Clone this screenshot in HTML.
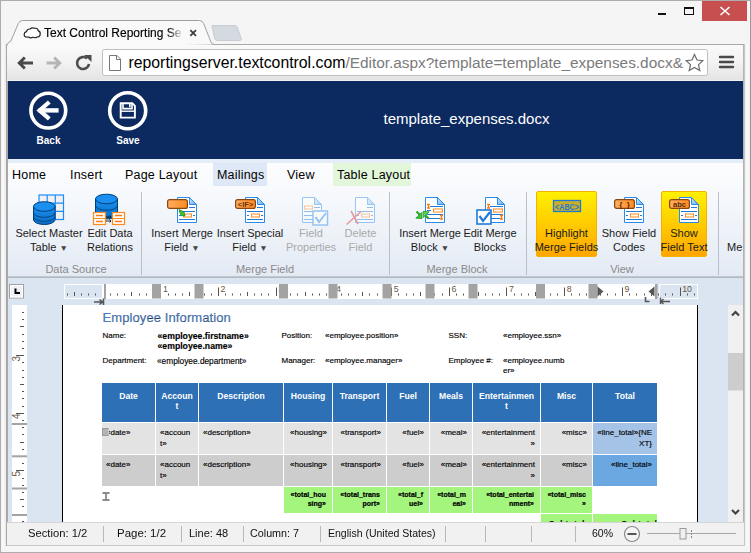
<!DOCTYPE html>
<html><head><meta charset="utf-8">
<style>
*{box-sizing:border-box}
html,body{margin:0;padding:0}
body{width:751px;height:553px;overflow:hidden;position:relative;background:#f5f5f5;font-family:"Liberation Sans",sans-serif;color:#000}
.a{position:absolute}
.frame{left:0;top:0;width:751px;height:553px;border:1px solid #adadad;border-right-color:#9a9a9a}
/* header */
.hdr{left:8px;top:81px;width:735px;height:78px;background:#0c2a5f}
.circ{width:40px;height:40px;border:3px solid #fff;border-radius:50%}
.hlbl{color:#fff;font-size:10px;line-height:13px;font-weight:bold;text-align:center;width:60px}
.title{color:#fff;font-size:15px;line-height:18px;left:383.5px;top:110px;white-space:nowrap}
/* ribbon */
.rtabs{left:8px;top:159px;width:735px;height:29px;background:linear-gradient(#e5edf9 0,#e5edf9 4px,#fdfdfe 4px,#f8fafd 100%)}
.rbody{left:8px;top:188px;width:735px;height:90px;background:linear-gradient(#f8fafd,#e3eaf4)}
.rt{font-size:12.5px;letter-spacing:0.2px;line-height:14px;top:167.5px;white-space:nowrap}
.lbl{font-size:11px;text-align:center;white-space:nowrap;line-height:14px;color:#1a1a1a}
.dis{color:#a9a9a9}
.tri{font-size:8.5px;color:#444;vertical-align:0px}
.glbl{font-size:11px;line-height:14px;color:#8a8a8a;text-align:center;white-space:nowrap}
.sep{width:1px;top:192px;height:83px;background:#b9c0c9}
/* doc */
.doc{left:8px;top:278px;width:735px;height:244px;background:#dbe5f1}
.page{left:62px;top:305px;width:636px;height:217px;background:#fff;border-left:1px solid #000;border-right:1px solid #000}
.docc{font-size:8px;line-height:10.5px;white-space:nowrap;color:#000;-webkit-text-stroke:0.15px #000}
.b{font-weight:bold}
.tc{overflow:hidden;white-space:nowrap}
.th{color:#fff;font-weight:bold;font-size:8.6px;line-height:10.3px;padding-top:8px}
.td{font-size:8px;line-height:11px;padding:4px 5px 0 4px;color:#000;-webkit-text-stroke:0.15px #000}
.tt{font-size:7px;font-weight:bold;line-height:9.3px;padding:3.2px 6px 0 4px;color:#000;-webkit-text-stroke:0.2px #000}
.ts{font-size:9px;font-weight:bold;padding-top:4.5px;color:#111}
.sb{left:728px;top:305px;width:15px;height:217px;background:#f0f0f0}
.status{left:7px;top:522px;width:737px;height:24px;background:#f1f1f1;border-top:1px solid #d5d5d5;border-bottom:1px solid #c8c8c8}
.st{font-size:11.7px;line-height:14px;top:525.5px;white-space:nowrap;color:#111;transform-origin:0 50%}
.ssep{top:526px;width:1px;height:16px;background:#b8b8b8}
</style></head><body>
<div class="a frame"></div>
<div class="a" style="left:1px;top:44px;width:5px;height:502px;background:linear-gradient(90deg,#f0f0f0,#fbfbfb 40%,#e8e8e8)"></div>
<div class="a" style="left:6px;top:44px;width:1.5px;height:502px;background:#a8a8a8"></div>
<div class="a" style="left:744px;top:44px;width:6px;height:502px;background:linear-gradient(90deg,#e8e8e8,#fbfbfb 50%,#f0f0f0)"></div>
<div class="a" style="left:743px;top:44px;width:2px;height:502px;background:linear-gradient(90deg,#a8a8a8,#d0d0d0)"></div>

<!-- browser tab -->
<div class="a" style="left:6px;top:44px;width:738px;height:37px;background:linear-gradient(#fafafa,#f2f2f2 50%,#e4e4e4 97%,#f2f2f2 97%);border-top:1px solid #a9a9a9;border-left:1px solid #a9a9a9;border-right:1px solid #b5b5b5"></div>
<svg class="a" style="left:0;top:0" width="751" height="80">
  <path d="M6.5,48 L6.5,46 Q7,43 10.8,41.2 L18.4,23.4 Q19.6,20.5 22.5,20.5 L199.5,20.5 Q202.5,20.5 203.8,23.8 L210.8,41.8 Q211.8,44.5 214.5,44.5" fill="#f9f9f9" stroke="#a0a0a0" stroke-width="1"/>
  <path d="M212,26.5 Q211.3,25.5 213,25.5 L235,25.5 Q236.6,25.5 237.2,27 L241.2,38.5 Q241.8,40.5 239.5,40.5 L217.5,40.5 Q215.5,40.5 214.8,38.8 Z" fill="#d5dae1" stroke="#c8ccd2" stroke-width="1"/>
  <!-- cloud -->
  <path d="M26.8,37 Q24,37 24.2,34.3 Q24.3,32 26.5,31.6 Q27,29 30,29 Q32,27 35,28.3 Q37.8,28 38.3,30.8 Q40.5,31.3 40.2,34.2 Q40,37 37,37 Q35.2,38.3 33,37.3 Q30.5,38.3 28.8,37.2 Z" fill="#fff" stroke="#222" stroke-width="1.2"/>
  <!-- close x -->
  <path d="M190.3,30.2 L196,35.8 M196,30.2 L190.3,35.8" stroke="#3a3a3a" stroke-width="1.7"/>
  <!-- window controls -->
  <rect x="702" y="1" width="45" height="20" fill="#c74f50"/>
  <path d="M720.5,7 L729.5,15 M729.5,7 L720.5,15" stroke="#fff" stroke-width="1.6"/>
  <rect x="658" y="13" width="8" height="2" fill="#111"/>
  <rect x="684.5" y="7.5" width="9" height="7" fill="none" stroke="#111" stroke-width="1"/>
  <rect x="684" y="7" width="10" height="2" fill="#111"/>
  <!-- back -->
  <path d="M19.5,63 L33,63 M24.8,57.5 L19.3,63 L24.8,68.5" fill="none" stroke="#4a4a4a" stroke-width="3"/>
  <path d="M46.5,63 L60,63 M54.2,57.5 L59.7,63 L54.2,68.5" fill="none" stroke="#b5b5b5" stroke-width="3"/>
  <!-- reload -->
  <path d="M89,64 A6,6 0 1 1 87,58.5" fill="none" stroke="#4d4d4d" stroke-width="2.6"/>
  <path d="M84,55 L91.5,55 L91.5,62 Z" fill="#4d4d4d"/>
  <!-- omnibox -->
  <rect x="102.5" y="49.5" width="605" height="26" rx="2" fill="#fff" stroke="#bfbfbf"/>
  <path d="M109.5,55.5 L117,55.5 L120.5,59 L120.5,70.5 L109.5,70.5 Z M116.5,55.5 L116.5,59.5 L120.5,59.5" fill="#fff" stroke="#777" stroke-width="1"/>
  <!-- star -->
  <path d="M694.5,54.5 L697,60 L702.8,60.7 L698.5,64.6 L699.8,70.5 L694.5,67.5 L689.2,70.5 L690.5,64.6 L686.2,60.7 L692,60 Z" fill="#fff" stroke="#6a6a6a" stroke-width="1.2"/>
  <!-- menu -->
  <path d="M720,57 L733,57 M720,62 L733,62 M720,67 L733,67" stroke="#4a4a4a" stroke-width="2.4" stroke-linecap="round"/>
</svg>
<div class="a" style="left:44px;top:24.3px;width:140px;height:18px;font-size:12px;line-height:18px;white-space:nowrap;overflow:hidden;color:#000;-webkit-text-stroke:0.15px #000;-webkit-mask-image:linear-gradient(90deg,#000 124px,transparent 139px)">Text Control Reporting Se</div>
<div class="a" style="left:128.5px;top:53px;font-size:15.8px;line-height:19px;white-space:nowrap;color:#000">reportingserver.textcontrol.com<span style="color:#7b7b7b;font-size:15.4px">/Editor.aspx?template=template_expenses.docx&amp;</span></div>

<!-- header -->
<div class="a hdr"></div>
<svg class="a" style="left:0;top:80px" width="200" height="79">
  <circle cx="48.3" cy="30.6" r="17.4" fill="none" stroke="#fff" stroke-width="3.6"/>
  <path d="M38.5,30.4 L58.6,30.4" stroke="#fff" stroke-width="4.4"/>
  <path d="M49.3,22 L39.6,30.4 L49.3,38.8" fill="none" stroke="#fff" stroke-width="4.2" stroke-linejoin="miter"/>
  <circle cx="127.7" cy="30.8" r="18" fill="none" stroke="#fff" stroke-width="3.6"/>
  <path d="M120.7,24.1 L120.7,37.6 L134.9,37.6 L134.9,25.8 L132.3,23.2 L120.7,23.2 Z" fill="none" stroke="#fff" stroke-width="1.9"/>
  <path d="M123,23.5 L123,28.6 L132,28.6 L132,23.5" fill="none" stroke="#fff" stroke-width="1.6"/>
  <rect x="129" y="24" width="1.6" height="3.2" fill="#fff"/>
  <path d="M121,31.2 L134.5,31.2" stroke="#fff" stroke-width="1.4"/>
</svg>
<div class="a hlbl" style="left:18.5px;top:133.5px">Back</div>
<div class="a hlbl" style="left:98px;top:133.5px">Save</div>
<div class="a title">template_expenses.docx</div>

<!-- ribbon tabs -->
<div class="a rtabs"></div>
<div class="a" style="left:213px;top:163px;width:54px;height:23px;background:#dfe8f6"></div>
<div class="a" style="left:333px;top:163px;width:78px;height:23px;background:#e2f6da"></div>
<div class="a rt" style="left:12px">Home</div>
<div class="a rt" style="left:70px">Insert</div>
<div class="a rt" style="left:125px">Page Layout</div>
<div class="a rt" style="left:217px">Mailings</div>
<div class="a rt" style="left:287px">View</div>
<div class="a rt" style="left:337px">Table Layout</div>

<!-- ribbon body -->
<div class="a rbody"></div>
<div class="a" style="left:8px;top:276px;width:735px;height:2px;background:linear-gradient(#c9cfd6,#a9b0b8)"></div>
<div class="a sep" style="left:141px"></div>
<div class="a sep" style="left:389px"></div>
<div class="a sep" style="left:526px"></div>
<div class="a sep" style="left:718px"></div>
<div class="a" style="left:536px;top:191px;width:61px;height:66px;border-radius:2px;background:linear-gradient(#fff000,#ffc400 60%,#ffa600);border:1px solid #f3b100"></div>
<div class="a" style="left:661px;top:191px;width:46px;height:66px;border-radius:2px;background:linear-gradient(#fff000,#ffc400 60%,#ffa600);border:1px solid #f3b100"></div>
<svg class="a" style="left:0;top:0" width="751" height="280">
 <defs>
  <linearGradient id="gfold" x1="0" y1="0" x2="1" y2="1"><stop offset="0" stop-color="#d8ecff"/><stop offset="1" stop-color="#5aa9f0"/></linearGradient>
  <linearGradient id="gor" x1="0" y1="0" x2="1" y2="0"><stop offset="0" stop-color="#ffad62"/><stop offset="1" stop-color="#ff8c1f"/></linearGradient>
  <linearGradient id="gdb" x1="0" y1="0" x2="0" y2="1"><stop offset="0" stop-color="#1a8ff0"/><stop offset="1" stop-color="#0a6cc4"/></linearGradient>
  <symbol id="doc" viewBox="0 0 20 26" width="20" height="26" overflow="visible">
   <path d="M0.5,0.5 H12.5 L19.5,7.5 V25.5 H0.5 Z" fill="#fff" stroke="#2a8be8"/>
   <path d="M12.5,0.5 V7.5 H19.5 Z" fill="url(#gfold)" stroke="#2a8be8"/>
   <path d="M12,10.5 H18 M2,14.5 H18 M2,18.5 H4 M16,18.5 H18 M2,22.5 H18" stroke="#1f7ad8" stroke-width="1.2"/>
   <rect x="6.5" y="17" width="8" height="3" fill="#fff" stroke="#ff8a1a"/>
  </symbol>
  <symbol id="docI" viewBox="0 0 20 26" width="20" height="26" overflow="visible">
   <path d="M0.5,0.5 H12.5 L19.5,7.5 V25.5 H0.5 Z" fill="#fff" stroke="#2a8be8"/>
   <path d="M12.5,0.5 V7.5 H19.5 Z" fill="url(#gfold)" stroke="#2a8be8"/>
   <path d="M5,9.5 H18 M2,13.5 H6 M2,17.5 H18 M2,21.5 H15" stroke="#1f7ad8" stroke-width="1.2"/>
   <rect x="8.5" y="12" width="9" height="3" fill="#fff" stroke="#ff8a1a"/>
   <path d="M2,7.5 H5 M3.5,7.5 V11 M2,11 H5 M15,18.5 H18 M16.5,18.5 V22 M15,22 H18" stroke="#ff7a10" stroke-width="1.3"/>
  </symbol>
  <symbol id="docP" viewBox="0 0 20 26" width="20" height="26" overflow="visible">
   <path d="M0.5,0.5 H12.5 L19.5,7.5 V25.5 H0.5 Z" fill="#fff" stroke="#2a8be8"/>
   <path d="M12.5,0.5 V7.5 H19.5 Z" fill="url(#gfold)" stroke="#2a8be8"/>
   <path d="M12,10.5 H18 M2,14.5 H18 M2,18.5 H12 M2,22.5 H12" stroke="#1f7ad8" stroke-width="1.2"/>
   <rect x="2.5" y="9" width="8" height="3" fill="#fff" stroke="#ff8a1a"/>
  </symbol>
  <symbol id="tag" viewBox="0 0 21 10" width="21" height="10" overflow="visible">
   <rect x="0.6" y="0.6" width="19.8" height="8.8" rx="2" fill="url(#gor)" stroke="#8a4610" stroke-width="1.2"/>
  </symbol>
 </defs>
 <!-- Select master table -->
 <g>
  <rect x="39" y="195" width="24.5" height="24.5" fill="#f2f0ee" stroke="#1a8cff" stroke-width="1.2"/>
  <path d="M47.2,195 V219.5 M55.3,195 V219.5 M39,203.2 H63.5 M39,211.3 H63.5" stroke="#1a8cff" stroke-width="1.2"/>
  <path d="M33.5,206.5 V220 A10.8,5 0 0 0 55,220 V206.5 Z" fill="url(#gdb)" stroke="#003f7a" stroke-width="1"/>
  <ellipse cx="44.3" cy="206.5" rx="10.8" ry="4.8" fill="#1a8ff0" stroke="#003f7a" stroke-width="1"/>
  <path d="M33.5,213 A10.8,4.8 0 0 0 55,213 M33.5,217 A10.8,4.8 0 0 0 55,217" fill="none" stroke="#003f7a" stroke-width="0.9"/>
 </g>
 <!-- Edit data relations -->
 <g>
  <path d="M95.5,199 V214 A11,5 0 0 0 117.5,214 V199 Z" fill="url(#gdb)" stroke="#003f7a" stroke-width="1"/>
  <ellipse cx="106.5" cy="199" rx="11" ry="4.8" fill="#1a8ff0" stroke="#003f7a" stroke-width="1"/>
  <path d="M95.5,205.5 A11,4.8 0 0 0 117.5,205.5" fill="none" stroke="#003f7a" stroke-width="0.9"/>
  <rect x="93.5" y="212.5" width="12" height="12" fill="#fff" stroke="#ff8a1a" stroke-width="1.2"/>
  <path d="M93.5,218.5 H105.5" stroke="#ff8a1a" stroke-width="1"/>
  <path d="M96,215.5 H103 M96,221.5 H103" stroke="#ff7a10" stroke-width="1.3"/>
  <rect x="112.5" y="212.5" width="12" height="12" fill="#fff" stroke="#ff8a1a" stroke-width="1.2"/>
  <path d="M112.5,218.5 H124.5" stroke="#ff8a1a" stroke-width="1"/>
  <path d="M115,215.5 H122 M115,221.5 H122" stroke="#ff7a10" stroke-width="1.3"/>
  <path d="M106,217 H111 M109.5,215.5 L111,217 L109.5,218.5 M106,221 H111 M109.5,219.5 L111,221 L109.5,222.5" fill="none" stroke="#111" stroke-width="0.9"/>
 </g>
 <!-- Insert merge field -->
 <use href="#doc" x="177" y="197"/>
 <use href="#tag" x="167" y="199"/>
 <path d="M179,209.5 L181,215.5 L185,216 L184,212 Z" fill="#3cc43c" stroke="#1a8a1a" stroke-width="0.8"/>
 <!-- Insert special field -->
 <use href="#doc" x="245" y="197"/>
 <use href="#tag" x="235" y="199"/>
 <text x="245.5" y="206.8" font-family="Liberation Sans" font-weight="bold" font-size="7.5" fill="#6a3008" text-anchor="middle">&lt;IF&gt;</text>
 <!-- Field properties (disabled) -->
 <g opacity="0.45">
  <use href="#docP" x="302" y="197"/>
  <rect x="313" y="211" width="14.5" height="14" fill="#fff" stroke="#2a8be8" stroke-width="1.5"/>
  <path d="M315.5,217 L319,222 L326,213" fill="none" stroke="#2a8be8" stroke-width="2"/>
 </g>
 <!-- Delete field -->
 <g opacity="0.45">
  <use href="#doc" x="355" y="197"/>
  <path d="M346.5,224.5 L361,211.5 M351,211 L358,224" stroke="#e0282a" stroke-width="1.6"/>
 </g>
 <!-- Insert merge block -->
 <use href="#docI" x="425" y="197"/>
 <path d="M416.5,211.5 L420,215" stroke="#2aa82a" stroke-width="2.2"/>
 <path d="M422,218.5 L415.8,218.2 L421.7,212.5 Z" fill="#3cc43c" stroke="#1a8a1a" stroke-width="0.7"/>
 <path d="M428.5,218.5 L425,215" stroke="#2aa82a" stroke-width="2.2"/>
 <path d="M423,211.5 L429.2,211.8 L423.3,217.5 Z" fill="#5ad35a" stroke="#1a8a1a" stroke-width="0.7"/>
 <!-- Edit merge blocks -->
 <use href="#docI" x="485" y="197"/>
 <rect x="477" y="210" width="14" height="14" fill="#fff" stroke="#1f7ad8" stroke-width="1.6"/>
 <path d="M479.5,216 L483,221 L490,212" fill="none" stroke="#1f7ad8" stroke-width="2.2"/>
 <!-- Highlight -->
 <rect x="553.5" y="200.5" width="27" height="11" fill="#c9ae2c" stroke="#1a7ad8" stroke-width="1.3"/>
 <text x="555" y="209.5" font-family="Liberation Sans" font-weight="bold" font-size="9" fill="#1a7ad8" textLength="24" lengthAdjust="spacingAndGlyphs">&lt;ABC&gt;</text>
 <!-- Show field codes -->
 <use href="#doc" x="624" y="197"/>
 <use href="#tag" x="614" y="199"/>
 <text x="624.5" y="207" font-family="Liberation Sans" font-weight="bold" font-size="8" fill="#5a2a08" text-anchor="middle">{&#160;&#160;}</text>
 <!-- Show field text -->
 <use href="#doc" x="679" y="197"/>
 <use href="#tag" x="669" y="199"/>
 <text x="679.5" y="206.8" font-family="Liberation Sans" font-weight="bold" font-size="7.5" fill="#5a2a08" text-anchor="middle">abc</text>
</svg>
<div class="a lbl" style="left:9px;top:226px;width:80px">Select Master<br>Table <span class="tri">&#9660;</span></div>
<div class="a lbl" style="left:70px;top:226px;width:80px">Edit Data<br>Relations</div>
<div class="a lbl" style="left:142px;top:226px;width:80px">Insert Merge<br>Field <span class="tri">&#9660;</span></div>
<div class="a lbl" style="left:210px;top:226px;width:80px">Insert Special<br>Field <span class="tri">&#9660;</span></div>
<div class="a lbl dis" style="left:271px;top:226px;width:80px">Field<br>Properties</div>
<div class="a lbl dis" style="left:320.5px;top:226px;width:80px">Delete<br>Field</div>
<div class="a lbl" style="left:390px;top:226px;width:80px">Insert Merge<br>Block <span class="tri">&#9660;</span></div>
<div class="a lbl" style="left:450px;top:226px;width:80px">Edit Merge<br>Blocks</div>
<div class="a lbl" style="left:526.5px;top:226px;width:80px">Highlight<br>Merge Fields</div>
<div class="a lbl" style="left:589px;top:226px;width:80px">Show Field<br>Codes</div>
<div class="a lbl" style="left:644px;top:226px;width:80px">Show<br>Field Text</div>
<div class="a" style="left:719px;top:733px;width:24px;top:226px;height:30px;overflow:hidden"><div class="lbl" style="position:absolute;left:8px;top:14px">Me</div></div>
<div class="a glbl" style="left:36px;top:261.5px;width:80px">Data Source</div>
<div class="a glbl" style="left:225px;top:261.5px;width:80px">Merge Field</div>
<div class="a glbl" style="left:417px;top:261.5px;width:80px">Merge Block</div>
<div class="a glbl" style="left:582px;top:261.5px;width:80px">View</div>

<!-- doc area -->
<div class="a doc"></div>
<div class="a page"></div>
<div class="a sb"></div>
<svg class="a" style="left:0;top:278px" width="751" height="30">
<rect x="64.5" y="6.5" width="38" height="14" fill="#dbe5f1" stroke="#fff" stroke-width="1"/>
<rect x="103" y="6" width="554" height="15" fill="#fff"/>
<rect x="659.5" y="6.5" width="38" height="14" fill="#dbe5f1" stroke="#fff" stroke-width="1"/>
<path d="M67.5,15.5 V17.5" stroke="#555" stroke-width="1"/>
<path d="M74.5,14 V18" stroke="#555" stroke-width="1"/>
<path d="M81.5,15.5 V17.5" stroke="#555" stroke-width="1"/>
<path d="M88.5,15.5 V17.5" stroke="#555" stroke-width="1"/>
<path d="M95.5,15.5 V17.5" stroke="#555" stroke-width="1"/>
<path d="M110.5,15.5 V17.5" stroke="#555" stroke-width="1"/>
<path d="M117.5,15.5 V17.5" stroke="#555" stroke-width="1"/>
<path d="M124.5,15.5 V17.5" stroke="#555" stroke-width="1"/>
<path d="M131.5,14 V18" stroke="#555" stroke-width="1"/>
<path d="M139.5,15.5 V17.5" stroke="#555" stroke-width="1"/>
<path d="M146.5,15.5 V17.5" stroke="#555" stroke-width="1"/>
<path d="M153.5,15.5 V17.5" stroke="#555" stroke-width="1"/>
<path d="M160.5,9.5 V18" stroke="#555" stroke-width="1"/>
<path d="M168.5,15.5 V17.5" stroke="#555" stroke-width="1"/>
<path d="M175.5,15.5 V17.5" stroke="#555" stroke-width="1"/>
<path d="M182.5,15.5 V17.5" stroke="#555" stroke-width="1"/>
<path d="M189.5,14 V18" stroke="#555" stroke-width="1"/>
<path d="M196.5,15.5 V17.5" stroke="#555" stroke-width="1"/>
<path d="M204.5,15.5 V17.5" stroke="#555" stroke-width="1"/>
<path d="M211.5,15.5 V17.5" stroke="#555" stroke-width="1"/>
<path d="M218.5,9.5 V18" stroke="#555" stroke-width="1"/>
<path d="M225.5,15.5 V17.5" stroke="#555" stroke-width="1"/>
<path d="M232.5,15.5 V17.5" stroke="#555" stroke-width="1"/>
<path d="M240.5,15.5 V17.5" stroke="#555" stroke-width="1"/>
<path d="M247.5,14 V18" stroke="#555" stroke-width="1"/>
<path d="M254.5,15.5 V17.5" stroke="#555" stroke-width="1"/>
<path d="M261.5,15.5 V17.5" stroke="#555" stroke-width="1"/>
<path d="M268.5,15.5 V17.5" stroke="#555" stroke-width="1"/>
<path d="M276.5,9.5 V18" stroke="#555" stroke-width="1"/>
<path d="M283.5,15.5 V17.5" stroke="#555" stroke-width="1"/>
<path d="M290.5,15.5 V17.5" stroke="#555" stroke-width="1"/>
<path d="M297.5,15.5 V17.5" stroke="#555" stroke-width="1"/>
<path d="M305.5,14 V18" stroke="#555" stroke-width="1"/>
<path d="M312.5,15.5 V17.5" stroke="#555" stroke-width="1"/>
<path d="M319.5,15.5 V17.5" stroke="#555" stroke-width="1"/>
<path d="M326.5,15.5 V17.5" stroke="#555" stroke-width="1"/>
<path d="M333.5,9.5 V18" stroke="#555" stroke-width="1"/>
<path d="M341.5,15.5 V17.5" stroke="#555" stroke-width="1"/>
<path d="M348.5,15.5 V17.5" stroke="#555" stroke-width="1"/>
<path d="M355.5,15.5 V17.5" stroke="#555" stroke-width="1"/>
<path d="M362.5,14 V18" stroke="#555" stroke-width="1"/>
<path d="M369.5,15.5 V17.5" stroke="#555" stroke-width="1"/>
<path d="M377.5,15.5 V17.5" stroke="#555" stroke-width="1"/>
<path d="M384.5,15.5 V17.5" stroke="#555" stroke-width="1"/>
<path d="M391.5,9.5 V18" stroke="#555" stroke-width="1"/>
<path d="M398.5,15.5 V17.5" stroke="#555" stroke-width="1"/>
<path d="M406.5,15.5 V17.5" stroke="#555" stroke-width="1"/>
<path d="M413.5,15.5 V17.5" stroke="#555" stroke-width="1"/>
<path d="M420.5,14 V18" stroke="#555" stroke-width="1"/>
<path d="M427.5,15.5 V17.5" stroke="#555" stroke-width="1"/>
<path d="M434.5,15.5 V17.5" stroke="#555" stroke-width="1"/>
<path d="M442.5,15.5 V17.5" stroke="#555" stroke-width="1"/>
<path d="M449.5,9.5 V18" stroke="#555" stroke-width="1"/>
<path d="M456.5,15.5 V17.5" stroke="#555" stroke-width="1"/>
<path d="M463.5,15.5 V17.5" stroke="#555" stroke-width="1"/>
<path d="M470.5,15.5 V17.5" stroke="#555" stroke-width="1"/>
<path d="M478.5,14 V18" stroke="#555" stroke-width="1"/>
<path d="M485.5,15.5 V17.5" stroke="#555" stroke-width="1"/>
<path d="M492.5,15.5 V17.5" stroke="#555" stroke-width="1"/>
<path d="M499.5,15.5 V17.5" stroke="#555" stroke-width="1"/>
<path d="M506.5,9.5 V18" stroke="#555" stroke-width="1"/>
<path d="M514.5,15.5 V17.5" stroke="#555" stroke-width="1"/>
<path d="M521.5,15.5 V17.5" stroke="#555" stroke-width="1"/>
<path d="M528.5,15.5 V17.5" stroke="#555" stroke-width="1"/>
<path d="M535.5,14 V18" stroke="#555" stroke-width="1"/>
<path d="M543.5,15.5 V17.5" stroke="#555" stroke-width="1"/>
<path d="M550.5,15.5 V17.5" stroke="#555" stroke-width="1"/>
<path d="M557.5,15.5 V17.5" stroke="#555" stroke-width="1"/>
<path d="M564.5,9.5 V18" stroke="#555" stroke-width="1"/>
<path d="M571.5,15.5 V17.5" stroke="#555" stroke-width="1"/>
<path d="M579.5,15.5 V17.5" stroke="#555" stroke-width="1"/>
<path d="M586.5,15.5 V17.5" stroke="#555" stroke-width="1"/>
<path d="M593.5,14 V18" stroke="#555" stroke-width="1"/>
<path d="M600.5,15.5 V17.5" stroke="#555" stroke-width="1"/>
<path d="M607.5,15.5 V17.5" stroke="#555" stroke-width="1"/>
<path d="M615.5,15.5 V17.5" stroke="#555" stroke-width="1"/>
<path d="M622.5,9.5 V18" stroke="#555" stroke-width="1"/>
<path d="M629.5,15.5 V17.5" stroke="#555" stroke-width="1"/>
<path d="M636.5,15.5 V17.5" stroke="#555" stroke-width="1"/>
<path d="M644.5,15.5 V17.5" stroke="#555" stroke-width="1"/>
<path d="M651.5,14 V18" stroke="#555" stroke-width="1"/>
<path d="M658.5,15.5 V17.5" stroke="#555" stroke-width="1"/>
<path d="M665.5,15.5 V17.5" stroke="#555" stroke-width="1"/>
<path d="M672.5,15.5 V17.5" stroke="#555" stroke-width="1"/>
<path d="M680.5,9.5 V18" stroke="#555" stroke-width="1"/>
<path d="M687.5,15.5 V17.5" stroke="#555" stroke-width="1"/>
<path d="M694.5,15.5 V17.5" stroke="#555" stroke-width="1"/>
<text x="162.9" y="14.199999999999989" font-family="Liberation Sans" font-size="8.8" fill="#6a5848">1</text>
<text x="220.6" y="14.199999999999989" font-family="Liberation Sans" font-size="8.8" fill="#6a5848">2</text>
<text x="278.3" y="14.199999999999989" font-family="Liberation Sans" font-size="8.8" fill="#6a5848">3</text>
<text x="336.0" y="14.199999999999989" font-family="Liberation Sans" font-size="8.8" fill="#6a5848">4</text>
<text x="393.7" y="14.199999999999989" font-family="Liberation Sans" font-size="8.8" fill="#6a5848">5</text>
<text x="451.4" y="14.199999999999989" font-family="Liberation Sans" font-size="8.8" fill="#6a5848">6</text>
<text x="509.1" y="14.199999999999989" font-family="Liberation Sans" font-size="8.8" fill="#6a5848">7</text>
<text x="566.8" y="14.199999999999989" font-family="Liberation Sans" font-size="8.8" fill="#6a5848">8</text>
<text x="624.5" y="14.199999999999989" font-family="Liberation Sans" font-size="8.8" fill="#6a5848">9</text>
<text x="682.2" y="14.199999999999989" font-family="Liberation Sans" font-size="8.8" fill="#6a5848">10</text>
<rect x="152.0" y="6" width="9" height="14.5" fill="#a3a3a3"/>
<rect x="194.5" y="6" width="9" height="14.5" fill="#a3a3a3"/>
<rect x="279.0" y="6" width="9" height="14.5" fill="#a3a3a3"/>
<rect x="328.5" y="6" width="9" height="14.5" fill="#a3a3a3"/>
<rect x="382.5" y="6" width="9" height="14.5" fill="#a3a3a3"/>
<rect x="425.5" y="6" width="9" height="14.5" fill="#a3a3a3"/>
<rect x="468.5" y="6" width="9" height="14.5" fill="#a3a3a3"/>
<rect x="536.0" y="6" width="9" height="14.5" fill="#a3a3a3"/>
<rect x="588.5" y="6" width="9" height="14.5" fill="#a3a3a3"/>
<rect x="104" y="6" width="2" height="15" fill="#a3a3a3"/>
<rect x="655" y="6" width="2.5" height="15" fill="#a3a3a3"/>
<path d="M597.5,8.5 L603.5,13.5 L597.5,18.5 Z" fill="#555"/>
<path d="M654.5,8.5 L648.5,13.5 L654.5,18.5 Z" fill="#555"/>
<path d="M94,24 H102 M99.5,21.5 L102.5,24 L99.5,26.5 M103.5,20.5 V27" fill="none" stroke="#555" stroke-width="1.6"/>
<path d="M660.5,19.5 V26 M661,23.5 H670 M663.5,21 L661,23.5 L663.5,26" fill="none" stroke="#555" stroke-width="1.4"/>
<path d="M645.5,19 V23.5 H649.5" fill="none" stroke="#555" stroke-width="1.6"/>
<rect x="9.5" y="6.5" width="14" height="13.5" fill="#eef2f7" stroke="#a0a0a0" stroke-width="1"/>
<rect x="10.5" y="7.5" width="12" height="11.5" fill="none" stroke="#fff" stroke-width="1"/>
<path d="M15.5,10.5 V15 H20" fill="none" stroke="#000" stroke-width="2"/>
</svg>
<svg class="a" style="left:0;top:305px" width="40" height="217">
<rect x="12" y="0" width="15" height="217" fill="#fff"/>
<path d="M22,7.5 H24" stroke="#555" stroke-width="1"/>
<path d="M22,14.5 H24" stroke="#555" stroke-width="1"/>
<path d="M20,21.5 H24" stroke="#555" stroke-width="1"/>
<path d="M22,29.5 H24" stroke="#555" stroke-width="1"/>
<path d="M22,36.5 H24" stroke="#555" stroke-width="1"/>
<path d="M22,43.5 H24" stroke="#555" stroke-width="1"/>
<path d="M16,50.5 H24" stroke="#555" stroke-width="1"/>
<path d="M22,57.5 H24" stroke="#555" stroke-width="1"/>
<path d="M22,65.5 H24" stroke="#555" stroke-width="1"/>
<path d="M22,72.5 H24" stroke="#555" stroke-width="1"/>
<path d="M20,79.5 H24" stroke="#555" stroke-width="1"/>
<path d="M22,86.5 H24" stroke="#555" stroke-width="1"/>
<path d="M22,93.5 H24" stroke="#555" stroke-width="1"/>
<path d="M22,101.5 H24" stroke="#555" stroke-width="1"/>
<path d="M16,108.5 H24" stroke="#555" stroke-width="1"/>
<path d="M22,115.5 H24" stroke="#555" stroke-width="1"/>
<path d="M22,122.5 H24" stroke="#555" stroke-width="1"/>
<path d="M22,129.5 H24" stroke="#555" stroke-width="1"/>
<path d="M20,137.5 H24" stroke="#555" stroke-width="1"/>
<path d="M22,144.5 H24" stroke="#555" stroke-width="1"/>
<path d="M22,151.5 H24" stroke="#555" stroke-width="1"/>
<path d="M22,158.5 H24" stroke="#555" stroke-width="1"/>
<path d="M16,165.5 H24" stroke="#555" stroke-width="1"/>
<path d="M22,173.5 H24" stroke="#555" stroke-width="1"/>
<path d="M22,180.5 H24" stroke="#555" stroke-width="1"/>
<path d="M22,187.5 H24" stroke="#555" stroke-width="1"/>
<path d="M20,194.5 H24" stroke="#555" stroke-width="1"/>
<path d="M22,201.5 H24" stroke="#555" stroke-width="1"/>
<path d="M22,209.5 H24" stroke="#555" stroke-width="1"/>
<path d="M22,216.5 H24" stroke="#555" stroke-width="1"/>
<text x="0" y="0" transform="translate(12.6,53.6) rotate(-90)" font-family="Liberation Sans" font-size="10" fill="#705a48" text-anchor="middle" dominant-baseline="hanging">3</text>
<text x="0" y="0" transform="translate(12.6,111.2) rotate(-90)" font-family="Liberation Sans" font-size="10" fill="#705a48" text-anchor="middle" dominant-baseline="hanging">4</text>
<text x="0" y="0" transform="translate(12.6,168.8) rotate(-90)" font-family="Liberation Sans" font-size="10" fill="#705a48" text-anchor="middle" dominant-baseline="hanging">5</text>
<rect x="12" y="118.0" width="15" height="2" fill="#a3a3a3"/>
<rect x="12" y="150.3" width="15" height="2" fill="#a3a3a3"/>
<rect x="12" y="182.5" width="15" height="2" fill="#a3a3a3"/>
<rect x="12" y="209.0" width="15" height="2" fill="#a3a3a3"/>
</svg>
<div class="a docc" style="left:102.5px;top:313px;font-size:13px;color:#4a82c8;letter-spacing:0.1px">Employee Information</div>
<div class="a docc" style="left:102.5px;top:330.5px">Name:</div>
<div class="a docc b" style="left:157.5px;top:330.5px;font-size:8.7px">«employee.firstname»<br>«employee.name»</div>
<div class="a docc" style="left:281.5px;top:330.5px">Position:</div>
<div class="a docc" style="left:325px;top:330.5px">«employee.position»</div>
<div class="a docc" style="left:448.5px;top:330.5px">SSN:</div>
<div class="a docc" style="left:503px;top:330.5px">«employee.ssn»</div>
<div class="a docc" style="left:102.5px;top:355.5px">Department:</div>
<div class="a docc" style="left:157px;top:355.5px;font-size:8.3px">«employee.department»</div>
<div class="a docc" style="left:281.5px;top:355.5px">Manager:</div>
<div class="a docc" style="left:325px;top:355.5px">«employee.manager»</div>
<div class="a docc" style="left:448.5px;top:355.5px">Employee #:</div>
<div class="a docc" style="left:503px;top:355.5px">«employee.numb<br>er»</div>
<!-- table -->
<div class="a tc th" style="left:102px;top:383px;width:53px;height:39px;background:#2e70b6;text-align:center">Date</div>
<div class="a tc th" style="left:156px;top:383px;width:42px;height:39px;background:#2e70b6;text-align:center">Accoun<br>t</div>
<div class="a tc th" style="left:199px;top:383px;width:84px;height:39px;background:#2e70b6;text-align:center">Description</div>
<div class="a tc th" style="left:284px;top:383px;width:48px;height:39px;background:#2e70b6;text-align:center">Housing</div>
<div class="a tc th" style="left:333px;top:383px;width:53px;height:39px;background:#2e70b6;text-align:center">Transport</div>
<div class="a tc th" style="left:387px;top:383px;width:42px;height:39px;background:#2e70b6;text-align:center">Fuel</div>
<div class="a tc th" style="left:430px;top:383px;width:42px;height:39px;background:#2e70b6;text-align:center">Meals</div>
<div class="a tc th" style="left:473px;top:383px;width:67px;height:39px;background:#2e70b6;text-align:center">Entertainmen<br>t</div>
<div class="a tc th" style="left:541px;top:383px;width:51px;height:39px;background:#2e70b6;text-align:center">Misc</div>
<div class="a tc th" style="left:593px;top:383px;width:64px;height:39px;background:#2e70b6;text-align:center">Total</div>
<div class="a tc td" style="left:102px;top:423px;width:53px;height:31px;background:#e3e3e3;text-align:left">«date»</div>
<div class="a tc td" style="left:156px;top:423px;width:42px;height:31px;background:#e3e3e3;text-align:left">«accoun<br>t»</div>
<div class="a tc td" style="left:199px;top:423px;width:84px;height:31px;background:#e3e3e3;text-align:left">«description»</div>
<div class="a tc td" style="left:284px;top:423px;width:48px;height:31px;background:#e3e3e3;text-align:right">«housing»</div>
<div class="a tc td" style="left:333px;top:423px;width:53px;height:31px;background:#e3e3e3;text-align:right">«transport»</div>
<div class="a tc td" style="left:387px;top:423px;width:42px;height:31px;background:#e3e3e3;text-align:right">«fuel»</div>
<div class="a tc td" style="left:430px;top:423px;width:42px;height:31px;background:#e3e3e3;text-align:right">«meal»</div>
<div class="a tc td" style="left:473px;top:423px;width:67px;height:31px;background:#e3e3e3;text-align:right">«entertainment<br>»</div>
<div class="a tc td" style="left:541px;top:423px;width:51px;height:31px;background:#e3e3e3;text-align:right">«misc»</div>
<div class="a tc td" style="left:593px;top:423px;width:64px;height:31px;background:#a4c3e7;text-align:right">«line_total»{NE<br>XT}</div>
<div class="a tc td" style="left:102px;top:455px;width:53px;height:31px;background:#cdcdcd;text-align:left">«date»</div>
<div class="a tc td" style="left:156px;top:455px;width:42px;height:31px;background:#cdcdcd;text-align:left">«accoun<br>t»</div>
<div class="a tc td" style="left:199px;top:455px;width:84px;height:31px;background:#cdcdcd;text-align:left">«description»</div>
<div class="a tc td" style="left:284px;top:455px;width:48px;height:31px;background:#cdcdcd;text-align:right">«housing»</div>
<div class="a tc td" style="left:333px;top:455px;width:53px;height:31px;background:#cdcdcd;text-align:right">«transport»</div>
<div class="a tc td" style="left:387px;top:455px;width:42px;height:31px;background:#cdcdcd;text-align:right">«fuel»</div>
<div class="a tc td" style="left:430px;top:455px;width:42px;height:31px;background:#cdcdcd;text-align:right">«meal»</div>
<div class="a tc td" style="left:473px;top:455px;width:67px;height:31px;background:#cdcdcd;text-align:right">«entertainment<br>»</div>
<div class="a tc td" style="left:541px;top:455px;width:51px;height:31px;background:#cdcdcd;text-align:right">«misc»</div>
<div class="a tc td" style="left:593px;top:455px;width:64px;height:31px;background:#6ba8e2;text-align:right">«line_total»</div>
<div class="a tc tt" style="left:284px;top:487px;width:48px;height:26px;background:#a4f57e;text-align:right">«total_hou<br>sing»</div>
<div class="a tc tt" style="left:333px;top:487px;width:53px;height:26px;background:#a4f57e;text-align:right">«total_trans<br>port»</div>
<div class="a tc tt" style="left:387px;top:487px;width:42px;height:26px;background:#a4f57e;text-align:right">«total_f<br>uel»</div>
<div class="a tc tt" style="left:430px;top:487px;width:42px;height:26px;background:#a4f57e;text-align:right">«total_m<br>eal»</div>
<div class="a tc tt" style="left:473px;top:487px;width:67px;height:26px;background:#a4f57e;text-align:right">«total_entertai<br>nment»</div>
<div class="a tc tt" style="left:541px;top:487px;width:51px;height:26px;background:#a4f57e;text-align:right">«total_misc<br>»</div>
<div class="a tc ts" style="left:541px;top:514px;width:51px;height:16px;background:#a4f57e;text-align:center">Subtotal</div>
<div class="a tc ts" style="left:593px;top:514px;width:64px;height:16px;background:#a4f57e;text-align:right">Subtotal</div>
<!-- /table -->
<div class="a" style="left:102px;top:428px;width:7px;height:8px;background:#b4b4b4;border:1px solid #9a9a9a;border-right-color:#c8c8c8"></div>
<svg class="a" style="left:100px;top:490px" width="14" height="14"><path d="M2.5,3 H9.5 M6,3 V10 M2.5,10 H9.5" stroke="#8a8a8a" stroke-width="1.8" fill="none"/></svg>
<!-- status -->
<div class="a status"></div>
<div class="a st" style="left:28px;transform:scaleX(0.96)">Section: 1/2</div>
<div class="a ssep" style="left:103px"></div>
<div class="a st" style="left:116.5px;transform:scaleX(0.98)">Page: 1/2</div>
<div class="a ssep" style="left:181px"></div>
<div class="a st" style="left:188.5px;transform:scaleX(0.94)">Line: 48</div>
<div class="a ssep" style="left:243px"></div>
<div class="a st" style="left:249.5px;transform:scaleX(0.92)">Column: 7</div>
<div class="a ssep" style="left:320px"></div>
<div class="a st" style="left:327.5px;transform:scaleX(0.9)">English (United States)</div>
<div class="a ssep" style="left:445px"></div>
<div class="a ssep" style="left:485px"></div>
<div class="a ssep" style="left:531px"></div>
<div class="a ssep" style="left:575px"></div>
<div class="a st" style="left:591.5px;transform:scaleX(0.9)">60%</div>
<svg class="a" style="left:600px;top:300px" width="151" height="253">
 <!-- scrollbar -->
 <rect x="128" y="5" width="15" height="217" fill="#f0f0f0"/>
 <rect x="128" y="53" width="15" height="37.5" fill="#cdcdcd"/>
 <path d="M132,15.5 L135.5,12 L139,15.5" fill="none" stroke="#444" stroke-width="2.2"/>
 <path d="M132,210 L135.5,213.5 L139,210" fill="none" stroke="#444" stroke-width="2.2"/>
 <!-- zoom slider -->
 <circle cx="32" cy="234" r="7.5" fill="#f4f4f4" stroke="#8a8a8a" stroke-width="1.2"/>
 <path d="M27.5,234 H36.5" stroke="#555" stroke-width="2"/>
 <path d="M47,233.5 H136" stroke="#a8a8a8" stroke-width="1"/>
 <path d="M91.5,230 V238" stroke="#888" stroke-width="1" stroke-dasharray="2,1"/>
 <rect x="80" y="228.5" width="6" height="10.5" fill="#f0f0f0" stroke="#9a9a9a" stroke-width="1"/>
</svg>
</body></html>
